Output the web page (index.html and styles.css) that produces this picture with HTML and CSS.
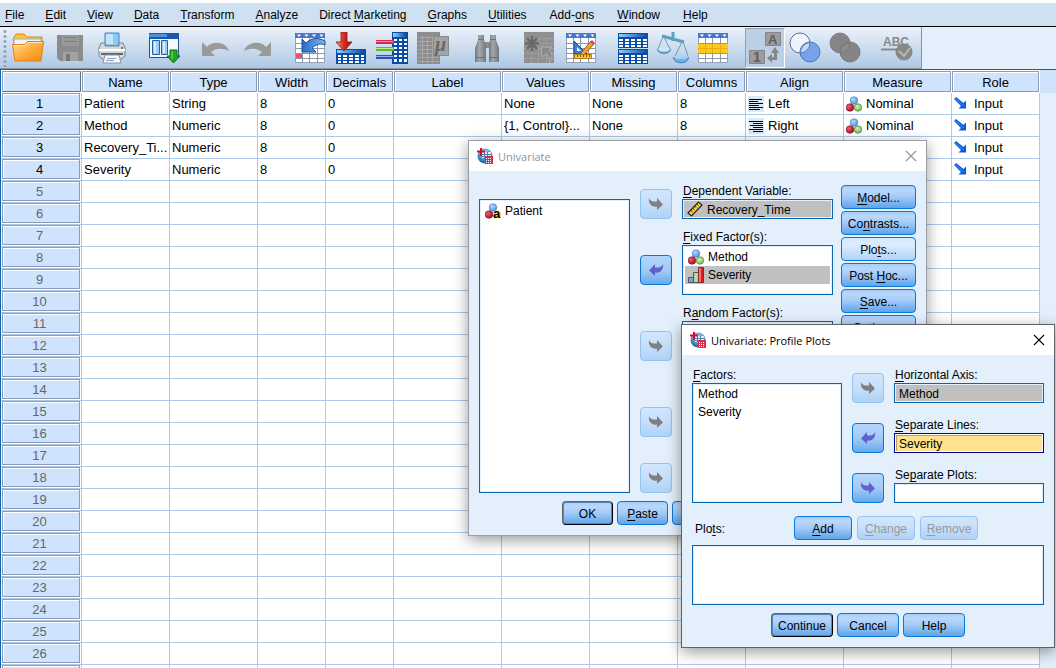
FILE: index.html
```html
<!DOCTYPE html>
<html lang="en">
<head>
  <meta charset="UTF-8" />
  <meta name="viewport" content="width=device-width, initial-scale=1.0"/>
  <title>Data Editor - Variable View</title>
  <link rel="stylesheet" href="styles.css">
</head>
<body>
  <!-- Shared icons and gradients -->
  <svg class="defs" width="0" height="0" aria-hidden="true">
    <defs>
      <linearGradient id="g-orange" x1="0" y1="0" x2="1" y2="1">
        <stop offset="0" stop-color="#ffe0a0"/><stop offset="0.5" stop-color="#ffad3a"/><stop offset="1" stop-color="#f58a10"/>
      </linearGradient>
      <linearGradient id="g-blue" x1="0" y1="0" x2="1" y2="0">
        <stop offset="0" stop-color="#8fd0ff"/><stop offset="1" stop-color="#0b4ba8"/>
      </linearGradient>
      <linearGradient id="g-red" x1="0" y1="0" x2="1" y2="0">
        <stop offset="0" stop-color="#ff9a8a"/><stop offset="0.5" stop-color="#d42a1c"/><stop offset="1" stop-color="#a01010"/>
      </linearGradient>
      <linearGradient id="g-curve" x1="0" y1="0" x2="1" y2="0">
        <stop offset="0" stop-color="#2a6cc8"/><stop offset="1" stop-color="#7ab8f0"/>
      </linearGradient>
      <linearGradient id="g-barrel" x1="0" y1="0" x2="1" y2="0">
        <stop offset="0" stop-color="#74787c"/><stop offset="0.4" stop-color="#a4a8ac"/><stop offset="1" stop-color="#74787c"/>
      </linearGradient>
      <radialGradient id="g-ball-blue" cx="0.4" cy="0.35" r="0.7"><stop offset="0" stop-color="#b5d8fa"/><stop offset="1" stop-color="#4a8edc"/></radialGradient>
      <radialGradient id="g-ball-red" cx="0.35" cy="0.35" r="0.7"><stop offset="0" stop-color="#f06070"/><stop offset="1" stop-color="#a80820"/></radialGradient>
      <radialGradient id="g-ball-green" cx="0.4" cy="0.35" r="0.7"><stop offset="0" stop-color="#d2efb4"/><stop offset="1" stop-color="#7cb850"/></radialGradient>
      <radialGradient id="g-globe" cx="0.5" cy="0.3" r="0.7"><stop offset="0" stop-color="#a8d4f0"/><stop offset="1" stop-color="#1f5fa8"/></radialGradient>
    </defs>
    <symbol id="i-nominal" viewBox="0 0 16 16">
      <circle cx="8" cy="4.5" r="3.8" fill="url(#g-ball-blue)" stroke="#4080cc" stroke-width="0.6"/>
      <circle cx="4" cy="11.5" r="3.8" fill="url(#g-ball-red)" stroke="#8a0818" stroke-width="0.6"/>
      <circle cx="12" cy="11.5" r="3.7" fill="url(#g-ball-green)" stroke="#558a38" stroke-width="0.8"/>
    </symbol>
    <symbol id="i-nominal-string" viewBox="0 0 16 16">
      <circle cx="8" cy="4.5" r="3.8" fill="url(#g-ball-blue)" stroke="#4080cc" stroke-width="0.6"/>
      <circle cx="4" cy="11.5" r="3.8" fill="url(#g-ball-red)" stroke="#8a0818" stroke-width="0.6"/>
      <circle cx="12" cy="11.5" r="4" fill="#ffd24a"/>
      <text x="8" y="15" font-family="Liberation Sans, sans-serif" font-size="13" font-weight="bold">a</text>
    </symbol>
    <symbol id="i-ordinal" viewBox="0 0 16 16">
      <path d="M0.500 15.500v-5h5v5z" fill="#6fa6e4" stroke="#555"/>
      <path d="M5.500 15.500v-10h5v10z" fill="#b9d69a" stroke="#555"/>
      <path d="M10.500 15.500v-15h5v15z" fill="#e01820" stroke="#7a3030"/>
      <path d="M12 1v14" stroke="#ff7070" stroke-width="2"/>
    </symbol>
    <symbol id="i-scale" viewBox="0 0 16 16">
      <path d="M1 12L11.500 1l3.500 3L4.500 15z" fill="#ffd23a" stroke="#222" stroke-width="1.200"/>
      <path d="M4 9.500l1.500 1.400M6 7.500l1.500 1.400M8 5.500l1.500 1.300M10 3.300l1.500 1.400" stroke="#222"/>
    </symbol>
    <symbol id="i-left" viewBox="0 0 16 16">
      <path fill="#dbe8f6" d="M0 0h16v16H0z"/>
      <path d="M1 3.500h13M1 5.500h9M1 7.500h14M1 9.500h10M1 11.500h14M1 13.500h11" stroke="#000"/>
    </symbol>
    <symbol id="i-right" viewBox="0 0 16 16">
      <path fill="#dbe8f6" d="M0 0h16v16H0z"/>
      <path d="M1 3.500h14M5 5.500h10M2 7.500h13M5 9.500h10M1 11.500h14M5 13.500h10" stroke="#000"/>
    </symbol>
    <symbol id="i-input" viewBox="0 0 16 16">
      <path d="M0 3l2-2 7.500 6L12 4.500v8H4.500L7 10z" fill="#0a5ae0"/>
      <path d="M1 2.500L10 10" stroke="#3a98ff"/>
    </symbol>
    <symbol id="i-app" viewBox="0 0 16 16">
      <circle cx="8" cy="8" r="7.500" fill="url(#g-globe)"/>
      <path d="M5 4h9v6H5z" fill="#dcecf8"/>
      <path d="M5 6.500h9M5 8.500h9M7.500 4v7M10.500 4v7" stroke="#4a88c8"/>
      <path d="M4 0v8M0 3.500h8" stroke="#d01030" stroke-width="2"/>
      <path d="M8 8h8v8H8z" fill="#d83048"/>
      <path d="M9 10.500h6M9 12.500h6M9 14.500h6" stroke="#fff" stroke-dasharray="1 1"/>
    </symbol>
    <symbol id="i-arrow-right" viewBox="0 0 16 16">
      <path d="M1 2C2 5 5 6 9 5.500V2l6 6.500L9 14v-3.500C4 11.500 0 8 1 2z" fill="currentColor"/>
    </symbol>
    <symbol id="i-arrow-left" viewBox="0 0 16 16">
      <path d="M15 2C14 5 11 6 7 5.500V2L1 8.500 7 14v-3.500C12 11.500 16 8 15 2z" fill="currentColor"/>
    </symbol>
    <symbol id="i-close" viewBox="0 0 12 12">
      <path d="M1 1l10 10M11 1L1 11" stroke="currentColor" stroke-width="1.100" fill="none"/>
    </symbol>
    <symbol id="i-grid" viewBox="0 0 32 32">
      <path d="M1.500 1.500h29v29h-29z" fill="#fff" stroke="#97a2b5"/>
      <path d="M1 1h30v5H1z" fill="#4677d0"/>
      <path d="M3 2.500h4l-2 2.500zM10.500 2.500h4l-2 2.500zM18 2.500h4l-2 2.500zM25.500 2.500h4l-2 2.500z" fill="#fff"/>
      <path d="M1 11.500h30M1 16.500h30M1 21.500h30M1 26.500h30M8.500 6v25M15.500 6v25M23.500 6v25" stroke="#8c98ae"/>
    </symbol>
  </svg>

  <nav class="menubar">
    <a href="#"><u>F</u>ile</a>
    <a href="#"><u>E</u>dit</a>
    <a href="#"><u>V</u>iew</a>
    <a href="#"><u>D</u>ata</a>
    <a href="#"><u>T</u>ransform</a>
    <a href="#"><u>A</u>nalyze</a>
    <a href="#">Direct <u>M</u>arketing</a>
    <a href="#"><u>G</u>raphs</a>
    <a href="#"><u>U</u>tilities</a>
    <a href="#">Add-<u>o</u>ns</a>
    <a href="#"><u>W</u>indow</a>
    <a href="#"><u>H</u>elp</a>
  </nav>

  <div class="toolbar-area">
    <div class="toolbar">
      <span class="grip"></span>
      <div class="tool-group">
        <button type="button" class="tool" aria-label="Open">
          <svg viewBox="0 0 32 32">
            <path d="M1 7l3-5h8l3 3h15v7H2z" fill="#ffc430" stroke="#e08a10"/>
            <path d="M2 7h27v7H2z" fill="#eaf5ff" stroke="#8ab4dc"/>
            <path d="M0.500 12.500h12l3-3h16L29 29H3z" fill="url(#g-orange)" stroke="#e87c10"/>
            <path d="M2 13.500h11l3-3h14" stroke="#ffe9b8" fill="none"/>
          </svg>
        </button>
        <button type="button" class="tool" aria-label="Save" disabled>
          <svg viewBox="0 0 32 32">
            <path d="M3 3h26v26H6l-3-3z" fill="#8c8c8c"/>
            <path d="M8 3h17v11H8z" fill="#999"/>
            <path d="M10 5.500h13M10 9.500h13" stroke="#808080"/>
            <path d="M9 20h15v9H9z" fill="#a2a2a2"/>
            <path d="M12 22h4v7h-4z" fill="#777"/>
          </svg>
        </button>
        <button type="button" class="tool" aria-label="Print">
          <svg viewBox="0 0 32 32">
            <path d="M9 1h14v13H9z" fill="#8dc8f4" stroke="#3a88cc"/>
            <path d="M10 2h7v10h-7z" fill="#c4e5fc"/>
            <path d="M5 11h4v3h14v-3h4l2 5v8l-3 3H6l-3-3v-8z" fill="#d5d8dd" stroke="#7c828c"/>
            <path d="M3 18h26" stroke="#fff" stroke-width="2"/>
            <path d="M5 22h22" stroke="#666" stroke-width="2"/>
            <path d="M25 16h2" stroke="#40a030" stroke-width="2"/>
            <path d="M9 23h14l2 8H7z" fill="#f6f9ff" stroke="#8a94a8"/>
            <path d="M11 26.500h9M10 28.500h8" stroke="#91a0bd"/>
          </svg>
        </button>
      </div>
      <div class="tool-group">
        <button type="button" class="tool" aria-label="Recall recently used dialogs">
          <svg viewBox="0 0 32 32">
            <path d="M1.500 1.500h29v24h-29z" fill="#f4f8fe" stroke="#24508e"/>
            <path d="M1 1h30v6H1z" fill="#1d58b0"/>
            <path d="M1 2h18v3H1z" fill="#4f92dc"/>
            <path d="M4.500 8.500h7v14h-7zM13.500 8.500h6v14h-6z" fill="#9dcdf2" stroke="#1867ac"/>
            <path d="M6 10h2v11H6zM15 10h2v11h-2z" fill="#d7edff"/>
            <path d="M22 18h7v6h3l-6.500 7-6.500-7h3z" fill="#22a822" stroke="#0c6810"/>
            <path d="M24 19v8" stroke="#80e070"/>
          </svg>
        </button>
      </div>
      <div class="tool-group">
        <button type="button" class="tool" aria-label="Undo" disabled>
          <svg viewBox="0 0 32 32">
            <path d="M2 10v14h13l-4-4c5-4 12-4 18-1-3-9-16-11-22-4z" fill="#9a9a9a"/>
          </svg>
        </button>
        <button type="button" class="tool" aria-label="Redo" disabled>
          <svg viewBox="0 0 32 32">
            <path d="M29 10v14H16l4-4c-5-4-12-4-18-1 3-9 16-11 22-4z" fill="#9a9a9a"/>
          </svg>
        </button>
      </div>
      <div class="tool-group variables">
        <button type="button" class="tool" aria-label="Go to case">
          <svg viewBox="0 0 32 32">
            <use href="#i-grid"/>
            <path d="M2 22h6v4H2z" fill="#f05060"/>
            <path d="M8 7v13h14l-4-4c4-4 9-5 13-3V9C24 5 17 6 12 11z" fill="url(#g-curve)" stroke="#1a4c98"/>
          </svg>
        </button>
        <button type="button" class="tool" aria-label="Go to variable">
          <svg viewBox="0 0 32 32">
            <path d="M1 17h30v15H1z" fill="#0a4da4"/>
            <path d="M2 18h27v3H2z" fill="url(#g-blue)"/>
            <path d="M3 23h3v2H3zM8 23h4v2H8zM14 23h4v2h-4zM20 23h4v2h-4zM26 23h3v2h-3zM3 26h3v2H3zM8 26h4v2H8zM14 26h4v2h-4zM20 26h4v2h-4zM26 26h3v2h-3zM3 29h3v2H3zM8 29h4v2H8zM14 29h4v2h-4zM20 29h4v2h-4zM26 29h3v2h-3z" fill="#fff"/>
            <path d="M6 0h6v10h5l-8 9-8-9h5z" fill="url(#g-red)" stroke="#901010" stroke-width="0.800"/>
          </svg>
        </button>
        <button type="button" class="tool" aria-label="Variables">
          <svg viewBox="0 0 32 32">
            <path d="M16 0h16v32H16z" fill="#0a4da4"/>
            <path d="M17 1h13v4H17z" fill="url(#g-blue)"/>
            <path d="M18 7h3v2h-3zM23 7h3v2h-3zM28 7h3v2h-3zM18 11h3v2h-3zM23 11h3v2h-3zM28 11h3v2h-3zM18 15h3v2h-3zM23 15h3v2h-3zM28 15h3v2h-3zM18 19h3v2h-3zM23 19h3v2h-3zM28 19h3v2h-3zM18 23h3v2h-3zM23 23h3v2h-3zM28 23h3v2h-3zM18 27h3v3h-3zM23 27h3v3h-3zM28 27h3v3h-3z" fill="#fff"/>
            <path d="M0 8h18v4H0z" fill="#d82850"/><path d="M0 9.500h17" stroke="#ff90a0"/>
            <path d="M0 15h18v4H0z" fill="#58c030"/><path d="M0 16.500h17" stroke="#b8f090"/>
            <path d="M0 23h18v4H0z" fill="#3050b8"/><path d="M0 24.500h17" stroke="#90b0ff"/>
          </svg>
        </button>
        <button type="button" class="tool" aria-label="Run descriptive statistics" disabled>
          <svg viewBox="0 0 32 32">
            <path d="M0 0h23v32H0z" fill="#8e8e8e"/>
            <path d="M1 5.500h21M1 9.500h21M1 13.500h21M1 17.500h21M1 21.500h21M1 25.500h21M1 29.500h21M5.500 4v27M10.500 4v27M15.500 4v27" stroke="#a8a8a8"/>
            <path d="M16.500 4.500h15v19h-15z" fill="#a3a3a3" stroke="#8a8a8a"/>
            <text x="18" y="19" font-family="Liberation Serif, serif" font-size="20" font-style="italic" font-weight="bold" fill="#686868">μ</text>
          </svg>
        </button>
      </div>
      <div class="tool-group">
        <button type="button" class="tool" aria-label="Find">
          <svg viewBox="0 0 32 32">
            <path d="M12 10h8v6h-8z" fill="#8a8e92"/>
            <path d="M7 3h6v5l2 5v17H4V16l3-8z" fill="url(#g-barrel)"/>
            <path d="M19 3h6v5l3 8v14H18V13l1-5z" fill="url(#g-barrel)"/>
            <path d="M4 25.500h11M18 25.500h10M7 7.500h6M19 7.500h6" stroke="#6d7276"/>
          </svg>
        </button>
      </div>
      <div class="tool-group">
        <button type="button" class="tool" aria-label="Insert case" disabled>
          <svg viewBox="0 0 32 32">
            <path d="M1 0h30v31H1z" fill="#8f8f8f"/>
            <path d="M1 6.500h30M1 11.500h30M1 16.500h30M1 21.500h30M1 26.500h30M8.500 6v25M15.500 6v25M23.500 6v25" stroke="#9f9f9f"/>
            <path d="M9 4v15M2 11.500h14M4 6l10 11M14 6L4 17" stroke="#6a6a6a" stroke-width="2.500"/>
            <path d="M18 15h11l-3 3c4 3 4 8 0 13 1-5 0-8-3-9l-4 3z" fill="#8a8a8a" stroke="#b0b0b0"/>
          </svg>
        </button>
        <button type="button" class="tool" aria-label="Insert variable">
          <svg viewBox="0 0 32 32">
            <use href="#i-grid"/>
            <path d="M9 9v13h13z" fill="#3b7fe0" stroke="#1444a0"/>
            <path d="M12 15v4h4z" fill="#fff"/>
            <path d="M16 21L26 9l3 3-10 11-4 1z" fill="#f5a030" stroke="#704010" stroke-width="0.800"/>
            <path d="M25 10l2-2 3 3-2 2z" fill="#d84848"/>
            <path d="M9.500 22.500h17v4h-17z" fill="#ffc830" stroke="#b07a10"/>
            <path d="M12.500 23v2M15.500 23v2M18.500 23v2M21.500 23v2M24.500 23v2" stroke="#704a08"/>
          </svg>
        </button>
      </div>
      <div class="tool-group tight">
        <button type="button" class="tool" aria-label="Split file">
          <svg viewBox="0 0 32 32">
            <path d="M1 1h30v15H1zM1 17h30v15H1z" fill="#0a4da4"/>
            <path d="M2 2h28v3H2zM2 18h28v3H2z" fill="url(#g-blue)"/>
            <path d="M2 7h4v2H2zM8 7h4v2H8zM14 7h4v2h-4zM20 7h4v2h-4zM26 7h4v2h-4zM2 10h4v2H2zM8 10h4v2H8zM14 10h4v2h-4zM20 10h4v2h-4zM26 10h4v2h-4zM2 13h4v2H2zM8 13h4v2H8zM14 13h4v2h-4zM20 13h4v2h-4zM26 13h4v2h-4zM2 23h4v2H2zM8 23h4v2H8zM14 23h4v2h-4zM20 23h4v2h-4zM26 23h4v2h-4zM2 26h4v2H2zM8 26h4v2H8zM14 26h4v2h-4zM20 26h4v2h-4zM26 26h4v2h-4zM2 29h4v2H2zM8 29h4v2H8zM14 29h4v2h-4zM20 29h4v2h-4zM26 29h4v2h-4z" fill="#fff"/>
          </svg>
        </button>
        <button type="button" class="tool" aria-label="Weight cases">
          <svg viewBox="0 0 32 32" fill="none">
            <path d="M16 0v9M5 4l22 6" stroke="#5e9fbd" stroke-width="3"/>
            <path d="M6 5L1 17M7 5l6 12M25 10l-7 14M26 10l5 14" stroke="#6e98b8"/>
            <path d="M0.500 17.500h13c0 5-13 5-13 0zM16.500 25.500h15c0 7-15 7-15 0z" fill="#6fb2ea" stroke="#3b7fae"/>
            <ellipse cx="7" cy="17.500" rx="6" ry="2" fill="#cde6fa"/>
            <ellipse cx="24" cy="25" rx="7" ry="2" fill="#a8d2f6"/>
          </svg>
        </button>
        <button type="button" class="tool" aria-label="Select cases">
          <svg viewBox="0 0 32 32">
            <use href="#i-grid"/>
            <path d="M1 12h30v9H1z" fill="#fdca18"/>
            <path d="M1 16.500h30M8.500 12v9M15.500 12v9M23.500 12v9" stroke="#e8b018"/>
          </svg>
        </button>
      </div>
      <div class="tool-group tight">
        <button type="button" class="tool pressed" aria-label="Value labels" disabled>
          <svg viewBox="0 0 32 32">
            <path d="M16.500 0.500h15v13h-15zM0.500 18.500h15v13h-15z" fill="#9c9c9c" stroke="#848484"/>
            <text x="19" y="12" font-family="Liberation Sans, sans-serif" font-size="13" font-weight="bold" fill="#5e5e5e">A</text>
            <text x="4" y="30" font-family="Liberation Sans, sans-serif" font-size="14" font-weight="bold" fill="#5e5e5e">1</text>
            <path d="M26 15l4 6h-2v7h-5v3l-5-5 5-4v3h2v-4h-3z" fill="#868686"/>
          </svg>
        </button>
        <button type="button" class="tool" aria-label="Use variable sets">
          <svg viewBox="0 0 32 32">
            <circle cx="11" cy="11" r="10" fill="#f4f8ff" fill-opacity="0.800" stroke="#606c80"/>
            <circle cx="21" cy="20" r="10" fill="#5a92e8" fill-opacity="0.750" stroke="#4d78bc"/>
            <path d="M11.500 21a10 10 0 0 1 9.500-10.500 10 10 0 0 1-9.500 10.500z" fill="#c3d7f6" stroke="#6080b0"/>
          </svg>
        </button>
        <button type="button" class="tool" aria-label="Show all variables" disabled>
          <svg viewBox="0 0 32 32">
            <circle cx="11" cy="11" r="10" fill="#858585" stroke="#808080"/>
            <circle cx="21" cy="20" r="10" fill="#858585" stroke="#787878"/>
            <path d="M11.500 21a10 10 0 0 1 9.500-10.500 10 10 0 0 1-9.500 10.500z" fill="#8c8c8c" stroke="#787878"/>
          </svg>
        </button>
      </div>
      <div class="tool-group">
        <button type="button" class="tool" aria-label="Spell check" disabled>
          <svg viewBox="0 0 32 32">
            <text x="2" y="14" font-family="Liberation Sans, sans-serif" font-size="12" font-weight="bold" fill="#8a8a8a">ABC</text>
            <path d="M0 17.500h16" stroke="#8a8a8a" stroke-width="2"/>
            <circle cx="23" cy="20" r="8.500" fill="#888"/>
            <path d="M18 19l5 5 6-8" stroke="#b8b8b8" stroke-width="2" fill="none"/>
          </svg>
        </button>
      </div>
    </div>
  </div>

  <main class="sheet">
    <table class="variables-table">
      <colgroup>
        <col class="c-row"><col class="c-88"><col class="c-88"><col class="c-68"><col class="c-68"><col class="c-108">
        <col class="c-88"><col class="c-88"><col class="c-68"><col class="c-98"><col class="c-108"><col class="c-88"><col>
      </colgroup>
      <thead>
        <tr>
          <th class="corner"><span class="head"></span></th>
          <th><span class="head">Name</span></th>
          <th><span class="head">Type</span></th>
          <th><span class="head">Width</span></th>
          <th><span class="head">Decimals</span></th>
          <th><span class="head">Label</span></th>
          <th><span class="head">Values</span></th>
          <th><span class="head">Missing</span></th>
          <th><span class="head">Columns</span></th>
          <th><span class="head">Align</span></th>
          <th><span class="head">Measure</span></th>
          <th><span class="head">Role</span></th>
          <th class="filler"></th>
        </tr>
      </thead>
      <tbody id="variables">
        <tr class="used">
          <th><span class="num">1</span></th>
          <td>Patient</td><td>String</td><td>8</td><td>0</td><td></td><td>None</td><td>None</td><td>8</td>
          <td><svg class="icon"><use href="#i-left"/></svg>Left</td>
          <td><svg class="icon"><use href="#i-nominal"/></svg>Nominal</td>
          <td><svg class="icon"><use href="#i-input"/></svg>Input</td>
          <td class="filler"></td>
        </tr>
        <tr class="used">
          <th><span class="num">2</span></th>
          <td>Method</td><td>Numeric</td><td>8</td><td>0</td><td></td><td>{1, Control}...</td><td>None</td><td>8</td>
          <td><svg class="icon"><use href="#i-right"/></svg>Right</td>
          <td><svg class="icon"><use href="#i-nominal"/></svg>Nominal</td>
          <td><svg class="icon"><use href="#i-input"/></svg>Input</td>
          <td class="filler"></td>
        </tr>
        <tr class="used">
          <th><span class="num">3</span></th>
          <td>Recovery_Ti...</td><td>Numeric</td><td>8</td><td>0</td><td></td><td></td><td></td><td></td>
          <td><svg class="icon"><use href="#i-right"/></svg></td>
          <td><svg class="icon"><use href="#i-scale"/></svg></td>
          <td><svg class="icon"><use href="#i-input"/></svg>Input</td>
          <td class="filler"></td>
        </tr>
        <tr class="used">
          <th><span class="num">4</span></th>
          <td>Severity</td><td>Numeric</td><td>8</td><td>0</td><td></td><td></td><td></td><td></td>
          <td><svg class="icon"><use href="#i-right"/></svg></td>
          <td><svg class="icon"><use href="#i-ordinal"/></svg></td>
          <td><svg class="icon"><use href="#i-input"/></svg>Input</td>
          <td class="filler"></td>
        </tr>
      </tbody>
    </table>
  </main>

  <section class="dialog univariate" role="dialog" aria-labelledby="univariate-title">
    <header class="titlebar inactive">
      <svg class="icon"><use href="#i-app"/></svg>
      <h2 id="univariate-title">Univariate</h2>
      <button type="button" class="close" aria-label="Close"><svg><use href="#i-close"/></svg></button>
    </header>
    <form class="dialog-body">
      <div class="columns">
        <ul class="list source" aria-label="Variables">
          <li><svg class="icon"><use href="#i-nominal-string"/></svg>Patient</li>
        </ul>
        <div class="pickers">
          <div class="picker">
            <button type="button" class="move" aria-label="Move to dependent variable" disabled><svg><use href="#i-arrow-right"/></svg></button>
            <div class="field">
              <label for="dependent"><u>D</u>ependent Variable:</label>
              <div class="slot filled">
                <svg class="icon"><use href="#i-scale"/></svg>
                <input type="text" id="dependent" value="Recovery_Time" readonly>
              </div>
            </div>
          </div>
          <div class="picker tall">
            <button type="button" class="move" aria-label="Remove from fixed factors"><svg><use href="#i-arrow-left"/></svg></button>
            <div class="field">
              <span class="caption" id="fixed-label"><u>F</u>ixed Factor(s):</span>
              <ul class="list" aria-labelledby="fixed-label">
                <li><svg class="icon"><use href="#i-nominal"/></svg>Method</li>
                <li class="selected"><svg class="icon"><use href="#i-ordinal"/></svg>Severity</li>
              </ul>
            </div>
          </div>
          <div class="picker tall">
            <button type="button" class="move" aria-label="Move to random factors" disabled><svg><use href="#i-arrow-right"/></svg></button>
            <div class="field">
              <span class="caption" id="random-label">R<u>a</u>ndom Factor(s):</span>
              <ul class="list" aria-labelledby="random-label"></ul>
            </div>
          </div>
          <div class="picker tall">
            <button type="button" class="move" aria-label="Move to covariates" disabled><svg><use href="#i-arrow-right"/></svg></button>
          </div>
          <div class="picker">
            <button type="button" class="move" aria-label="Move to weight" disabled><svg><use href="#i-arrow-right"/></svg></button>
          </div>
        </div>
        <div class="side">
          <button type="button" class="btn"><span><u>M</u>odel...</span></button>
          <button type="button" class="btn"><span>Co<u>n</u>trasts...</span></button>
          <button type="button" class="btn hover"><span>Plo<u>t</u>s...</span></button>
          <button type="button" class="btn"><span>Post <u>H</u>oc...</span></button>
          <button type="button" class="btn"><span><u>S</u>ave...</span></button>
          <button type="button" class="btn"><span><u>O</u>ptions...</span></button>
        </div>
      </div>
      <div class="actions">
        <button type="button" class="btn default">OK</button>
        <button type="button" class="btn"><span><u>P</u>aste</span></button>
        <button type="button" class="btn"><span><u>R</u>eset</span></button>
        <button type="button" class="btn">Cancel</button>
        <button type="button" class="btn">Help</button>
      </div>
    </form>
  </section>

  <section class="dialog profile" role="dialog" aria-labelledby="profile-title">
    <header class="titlebar">
      <svg class="icon"><use href="#i-app"/></svg>
      <h2 id="profile-title">Univariate: Profile Plots</h2>
      <button type="button" class="close" aria-label="Close"><svg><use href="#i-close"/></svg></button>
    </header>
    <form class="dialog-body">
      <div class="columns">
        <div class="field factors">
          <label for="factors"><u>F</u>actors:</label>
          <select id="factors" class="list" multiple>
            <option>Method</option>
            <option>Severity</option>
          </select>
        </div>
        <div class="pickers">
          <div class="picker">
            <button type="button" class="move" aria-label="Move to horizontal axis" disabled><svg><use href="#i-arrow-right"/></svg></button>
            <div class="field">
              <label for="axis"><u>H</u>orizontal Axis:</label>
              <div class="slot filled"><input type="text" id="axis" value="Method" readonly></div>
            </div>
          </div>
          <div class="picker">
            <button type="button" class="move" aria-label="Remove from separate lines"><svg><use href="#i-arrow-left"/></svg></button>
            <div class="field">
              <label for="lines"><u>S</u>eparate Lines:</label>
              <div class="slot active"><input type="text" id="lines" value="Severity" readonly></div>
            </div>
          </div>
          <div class="picker">
            <button type="button" class="move" aria-label="Move to separate plots"><svg><use href="#i-arrow-right"/></svg></button>
            <div class="field">
              <label for="separate-plots">Se<u>p</u>arate Plots:</label>
              <div class="slot"><input type="text" id="separate-plots" readonly></div>
            </div>
          </div>
        </div>
      </div>
      <div class="plots-bar">
        <label for="plots">Plo<u>t</u>s:</label>
        <button type="button" class="btn"><span><u>A</u>dd</span></button>
        <button type="button" class="btn" disabled><span><u>C</u>hange</span></button>
        <button type="button" class="btn" disabled><span><u>R</u>emove</span></button>
      </div>
      <select id="plots" class="list plots-list" multiple></select>
      <div class="actions">
        <button type="button" class="btn default">Continue</button>
        <button type="button" class="btn">Cancel</button>
        <button type="button" class="btn">Help</button>
      </div>
    </form>
  </section>

  <script>
    // Fill the rest of the sheet with empty numbered rows
    const body = document.getElementById("variables");
    for (let n = 5; n <= 27; n++) {
      const row = document.createElement("tr");
      row.innerHTML = '<th><span class="num">' + (n < 27 ? n : "") + '</span></th>' + "<td></td>".repeat(11) + '<td class="filler"></td>';
      body.appendChild(row);
    }
  </script>
</body>
</html>
```
FILE: styles.css
```css
* {
  box-sizing: border-box;
}
body {
  margin: 0;
  padding-top: 3px;
  height: 100vh;
  overflow: hidden;
  display: flex;
  flex-direction: column;
  background-color: #fff;
  color: #000;
  font-family: "Liberation Sans", Arial, sans-serif;
  font-size: 12px;
}
button, input, select {
  font-family: inherit;
  font-size: 12px;
  color: #000;
}
u {
  text-underline-offset: 2px;
}
.defs {
  position: absolute;
}
.icon {
  width: 16px;
  height: 16px;
  flex: none;
}

/* Menu */
.menubar {
  display: flex;
  align-items: center;
  flex: none;
  gap: 21px;
  height: 24px;
  padding-left: 5px;
  background-color: #cfe0f1;
  border-bottom: 1px solid #000;
}
.menubar a {
  color: #000;
  text-decoration: none;
  white-space: nowrap;
}
.menubar a:nth-child(n+10) {
  padding-left: 2px;
}

/* Toolbar */
.toolbar-area {
  display: flex;
  flex: none;
  background-color: #e3effb;
  border-bottom: 1px solid #0a64b4;
}
.toolbar {
  display: flex;
  align-items: center;
  gap: 12px;
  height: 42px;
  padding-right: 4px;
  background: linear-gradient(#ecf2fa, #aec8e4);
  border-right: 1px solid #8b9299;
  border-bottom: 1px solid #8b9299;
}
.grip {
  width: 4px;
  height: 38px;
  margin-left: 3px;
  margin-right: -11px;
  background: radial-gradient(circle, #8fa3ba 1px, transparent 2px) 0 0 / 4px 5px;
}
.tool-group {
  display: flex;
  gap: 2px;
}
.tool-group.variables {
  gap: 1px;
  margin-right: 2px;
}
.tool-group.tight {
  gap: 0;
}
.tool {
  display: flex;
  align-items: center;
  justify-content: center;
  width: 40px;
  height: 40px;
  padding: 0;
  background: none;
  border: 1px solid transparent;
}
.tool svg {
  width: 32px;
  height: 32px;
}
.tool.pressed {
  background-color: #bccfe4;
  border-color: #93a1b2 #fff #fff #93a1b2;
}

/* Variable view */
.sheet {
  flex: 1;
  min-height: 0;
  overflow: hidden;
  border-left: 1px solid #0a64b4;
}
.variables-table {
  width: 100%;
  table-layout: fixed;
  border-collapse: separate;
  border-spacing: 0;
  font-size: 13px;
}
.c-row { width: 81px; }
.c-68 { width: 68px; }
.c-88 { width: 88px; }
.c-98 { width: 98px; }
.c-108 { width: 108px; }
th {
  padding: 0;
  font-weight: normal;
}
thead th {
  padding: 1px 0;
  border-right: 1px solid #fff;
}
.head, .num {
  display: block;
  background-color: #cfe3fc;
  border: 1px solid #8c9cb8;
  box-shadow: inset 1px 1px 0 #fff;
  text-align: center;
}
.head {
  height: 21px;
  line-height: 21px;
}
thead .corner {
  padding-left: 1px;
}
.corner .head {
  border-right-color: #64707f;
  border-bottom-color: #64707f;
}
tbody th {
  padding: 0 1px 1px;
  border-right: 1px solid #abc9ea;
  border-bottom: 1px solid #abc9ea;
}
.num {
  height: 20px;
  line-height: 19px;
  padding-right: 3px;
  color: #666;
}
.used .num {
  color: #000;
}
td {
  height: 22px;
  padding: 0 2px;
  line-height: 20px;
  white-space: nowrap;
  overflow: hidden;
  border-right: 1px solid #abc9ea;
  border-bottom: 1px solid #abc9ea;
}
td .icon {
  margin-right: 4px;
  vertical-align: -4px;
}
.filler {
  border: none;
  background-color: #e3effb;
}
thead .filler {
  border: none;
  background-color: #cfe3fc;
}

/* Dialogs */
.dialog {
  position: absolute;
  border: 1px solid #9a9fa5;
  background-color: #e3effb;
  box-shadow: 0 4px 14px rgba(0, 0, 0, 0.4);
}
.univariate {
  left: 468px;
  top: 140px;
}
.profile {
  left: 681px;
  top: 324px;
  border-color: #5d6368;
}
.titlebar {
  display: flex;
  align-items: center;
  gap: 5px;
  height: 30px;
  padding: 0 9px 0 8px;
  background-color: #fff;
}
.titlebar h2 {
  flex: 1;
  margin: 0;
  font-family: "Open Sans", "Noto Sans", sans-serif;
  font-size: 11px;
  font-weight: normal;
}
.titlebar.inactive {
  color: #949494;
}
.close {
  display: flex;
  padding: 0;
  background: none;
  border: none;
  color: inherit;
}
.close svg {
  width: 12px;
  height: 12px;
}
.dialog-body {
  padding: 13px 10px 10px;
}
.columns {
  display: flex;
  gap: 10px;
}
.univariate .columns {
  gap: 8px;
}
.list {
  display: block;
  width: 100%;
  margin: 0;
  padding: 2px;
  list-style: none;
  background-color: #fff;
  border: 1px solid #0a64b4;
  border-radius: 0;
  box-shadow: inset 0 0 0 1px #e3effb;
  overflow: hidden;
  outline: none;
}
.list li {
  display: flex;
  align-items: center;
  gap: 4px;
  height: 18px;
  padding-left: 3px;
}
.list .selected {
  background-color: #c0c0c0;
}
.list option {
  height: 18px;
  padding: 1px 3px 0;
  line-height: 18px;
}
.source {
  width: 151px;
  margin-top: 15px;
  margin-right: 2px;
}
.pickers {
  display: flex;
  flex-direction: column;
  gap: 11px;
}
.profile .pickers {
  gap: 15px;
}
.picker {
  display: flex;
  gap: 10px;
  height: 35px;
}
.picker.tall {
  height: 65px;
}
.picker.tall .move {
  margin-top: 25px;
}
.picker.tall .list {
  height: 50px;
}
.field {
  width: 151px;
}
.profile .field {
  width: 150px;
}
.field label, .caption {
  display: block;
  height: 15px;
  line-height: 14px;
  padding-left: 1px;
}
.factors .list {
  height: 120px;
}
.move {
  display: flex;
  align-items: center;
  justify-content: center;
  width: 32px;
  height: 30px;
  margin-top: 5px;
  padding: 0;
  color: #6360cc;
  background: linear-gradient(#b4d5fb, #a3cbf8 50%, #68aaec);
  border: 1px solid #0a78d7;
  border-radius: 4px;
}
.move svg {
  width: 16px;
  height: 16px;
}
.move:disabled {
  color: #808080;
  background: linear-gradient(#d2e6fd, #c6dffb 50%, #aed2f7);
  border-color: #92c3f2;
}
.slot {
  display: flex;
  align-items: center;
  height: 20px;
  padding-left: 4px;
  background-color: #fff;
  border: 1px solid #0a64b4;
  box-shadow: inset 0 0 0 1px #e3effb;
}
.slot input {
  flex: 1;
  width: 100%;
  min-width: 0;
  padding: 2px 0 0;
  background: none;
  border: none;
  outline: none;
}
.slot .icon {
  margin-right: 4px;
}
.slot.filled {
  background-color: #c0c0c0;
}
.slot.active {
  background-color: #ffe38c;
  border-color: #0000a0;
  box-shadow: inset 0 0 0 1px #fff, inset 2px 2px 0 #b3a062;
}
.btn {
  height: 24px;
  padding: 1px 0 0;
  background: linear-gradient(#a8cdf8, #b9d8fc 20%, #a2caf8 50%, #5ea4ea);
  border: 1px solid #0a78d7;
  border-radius: 4px;
}
.btn.hover {
  background: linear-gradient(#d4e8fe, #dcecff 30%, #b0d4f9);
}
.btn.default {
  border-color: #606468 #000 #000 #606468;
  box-shadow: inset 0 0 0 1px #5c86b4;
}
.btn:disabled {
  color: #999;
  background: linear-gradient(#d2e6fd, #c6dffb 50%, #aed2f7);
  border-color: #92c3f2;
}
.side {
  display: flex;
  flex-direction: column;
  gap: 2px;
  width: 75px;
  padding-top: 1px;
}
.actions {
  display: flex;
  justify-content: center;
  gap: 4px;
  margin-top: 8px;
}
.actions .btn {
  width: 51px;
}
.profile .actions .btn {
  width: 62px;
}
.plots-bar {
  display: grid;
  grid-template-columns: 97px 58px 58px 58px;
  gap: 5px;
  align-items: center;
  margin: 13px 0 5px;
}
.plots-bar label {
  padding: 1px 0 0 3px;
}
.plots-list {
  height: 60px;
}
```
